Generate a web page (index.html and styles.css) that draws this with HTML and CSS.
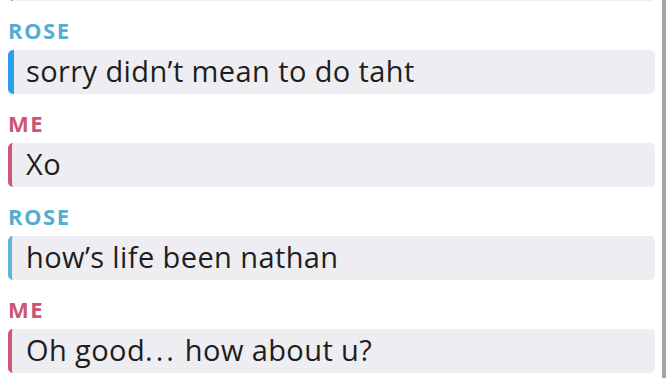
FILE: index.html
```html
<html>

<head>
	<title>Chat</title>
	<link rel="stylesheet" href="styles.css">
</head>
<body>
	<div class="screen">
		<div class="chat">
			<div class="msg me">
				<div class="bubble"></div>
			</div>
			<div class="msg rose">
				<div class="name">ROSE</div>
				<div class="bubble first">sorry didn’t mean to do taht</div>
			</div>
			<div class="msg me">
				<div class="name">ME</div>
				<div class="bubble">Xo</div>
			</div>
			<div class="msg rose">
				<div class="name">ROSE</div>
				<div class="bubble">how’s life been nathan</div>
			</div>
			<div class="msg me">
				<div class="name">ME</div>
				<div class="bubble">Oh good<span class="dots">...</span> how about u?</div>
			</div>
		</div>
		<div class="scroll"></div>
	</div>
</body>
</html>
```

FILE: styles.css
```css
body{
	margin: 0;
	background-color: #fff;
	font-family: 'Open Sans', sans-serif;
	overflow: hidden;
}

.screen{
	display: flex;
	height: 378px;
	padding-right: 6px;
	gap: 7px;
}

.chat{
	flex: 1;
	padding-left: 8px;
	margin-top: -59px;
}

.scroll{
	width: 4px;
	background-color: #a3a3a6;
}

.msg{
	margin-top: 16px;
}

.name{
	font-size: 22px;
	font-weight: bold;
	line-height: 26px;
	letter-spacing: 1.5px;
	margin-bottom: 7px;
}

.bubble{
	height: 44px;
	line-height: 41px;
	font-size: 29px;
	letter-spacing: 0.4px;
	color: #1e1e1e;
	background-color: #eeeef2;
	border-left: 4px solid;
	border-radius: 5px;
	padding-left: 14px;
}

.dots{
	letter-spacing: 3px;
}

.rose .name{
	color: #55add2;
}

.rose .bubble{
	border-left-color: #62b2d8;
}

.rose .bubble.first{
	border-left: 6px solid #2b9ef0;
	padding-left: 12px;
}

.me .name{
	color: #cd5574;
}

.me .bubble{
	border-left-color: #cf5877;
}
```
